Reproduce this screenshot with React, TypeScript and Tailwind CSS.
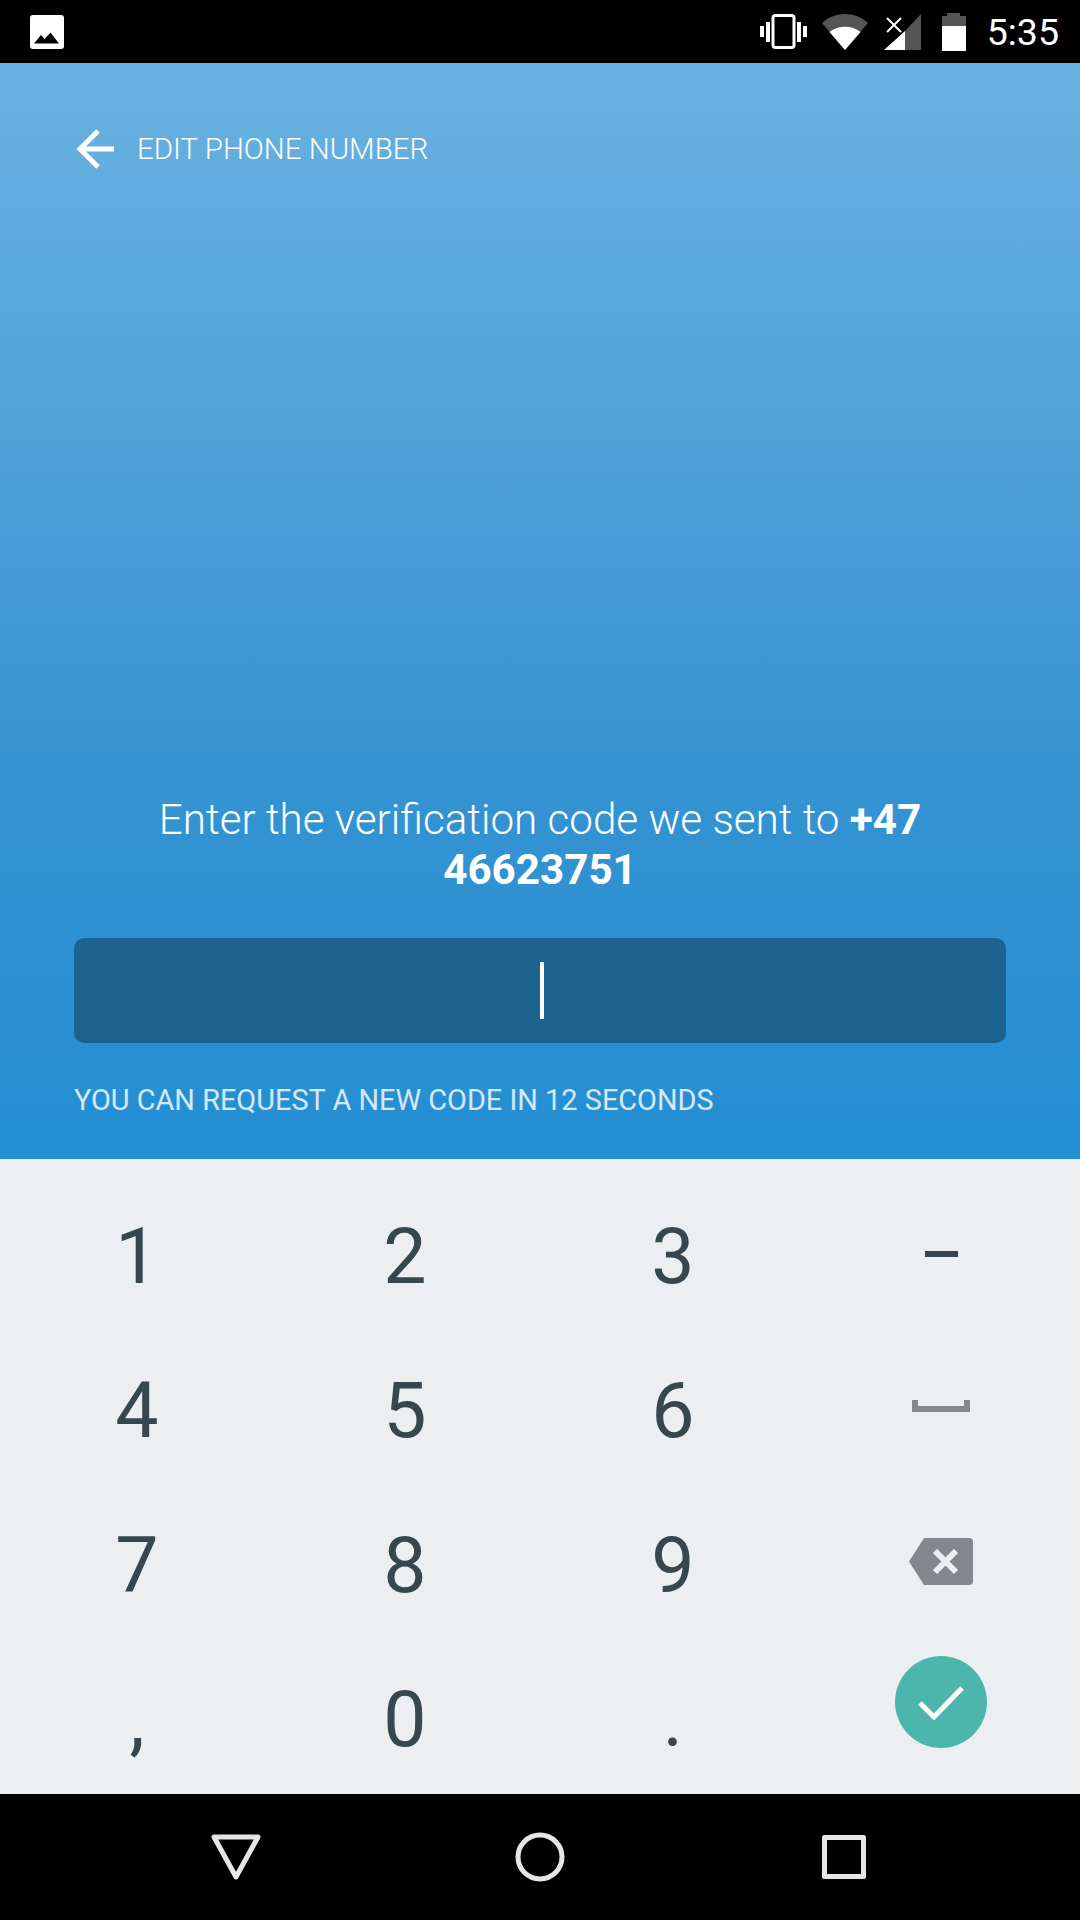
import React from 'react'

// Status bar icons
function PictureIcon() {
  return (
    <svg width="34" height="34" viewBox="0 0 34 34">
      <rect x="0" y="0" width="34" height="34" rx="3" fill="#fff" />
      <path d="M4 28.5 L11 20 L14.5 24 L20.5 17.5 L29 28.5 Z" fill="#000" />
    </svg>
  )
}

function VibrateIcon() {
  return (
    <svg width="47" height="35" viewBox="0 0 47 35" fill="#fff">
      <rect x="0" y="12" width="4" height="11" />
      <rect x="6" y="8" width="4" height="20" />
      <rect x="37" y="8" width="4" height="20" />
      <rect x="43" y="12" width="4" height="11" />
      <rect x="13" y="1.5" width="21" height="32" rx="2.5" fill="none" stroke="#fff" strokeWidth="3" />
    </svg>
  )
}

function WifiIcon() {
  return (
    <svg width="46" height="36" viewBox="0 0 46 36">
      <path d="M0 9 C13 -3 33 -3 46 9 L23 36 Z" fill="#555" />
      <path d="M7.5 18 C16 11 30 11 38.5 18 L23 36 Z" fill="#fff" />
    </svg>
  )
}

function SignalIcon() {
  return (
    <svg width="37" height="36" viewBox="0 0 37 36">
      <path d="M37 0 V36 H21 V17 Z" fill="#555" />
      <path d="M21 17 V36 H0 Z" fill="#fff" />
      <path d="M3 4 L17 18 M17 4 L3 18" stroke="#fff" strokeWidth="2" />
    </svg>
  )
}

function BatteryIcon() {
  return (
    <svg width="24" height="38" viewBox="0 0 24 38">
      <path d="M5 0 H18 V3 H24 V13 H0 V3 H5 Z" fill="#555" />
      <rect x="0" y="13" width="24" height="25" fill="#fff" />
    </svg>
  )
}

function StatusBar() {
  return (
    <div className="h-[63px] bg-black flex items-center justify-between pl-[30px] pr-[21px] shrink-0">
      <PictureIcon />
      <div className="flex items-center">
        <VibrateIcon />
        <div className="ml-[15px]"><WifiIcon /></div>
        <div className="ml-[16px]"><SignalIcon /></div>
        <div className="ml-[21px]"><BatteryIcon /></div>
        <span className="ml-[21px] text-[37.5px] leading-[40px] text-white">5:35</span>
      </div>
    </div>
  )
}

function Header() {
  return (
    <div className="flex items-center pl-[76px] pt-[66px]">
      <svg width="38" height="40" viewBox="0 0 38 40" fill="none" stroke="#fff" strokeWidth="5">
        <path d="M38 20 H4" />
        <path d="M22 2 L4 20 L22 38" />
      </svg>
      <span className="ml-[23px] text-[29.5px] leading-[38px] font-light text-white">EDIT PHONE NUMBER</span>
    </div>
  )
}

function CodeForm() {
  return (
    <div className="px-[74px] pb-[39px]">
      <p className="text-[42.2px] leading-[50px] font-light text-white text-center">
        Enter the verification code we sent to <b className="font-bold">+47</b>
        <br />
        <b className="font-bold">46623751</b>
      </p>
      <div className="mt-[43px] h-[105px] rounded-[10px] bg-[#1c628f] flex items-center justify-center">
        <div className="w-[4px] h-[57px] bg-white ml-[3px]" />
      </div>
      <p className="mt-[37px] text-[28.9px] leading-[40px] text-white/80">YOU CAN REQUEST A NEW CODE IN 12 SECONDS</p>
    </div>
  )
}

function Digit({ value }: { value: string }) {
  return (
    <div className="flex items-center justify-center pt-[7px] text-[77px] leading-none text-[#37474f]">
      {value}
    </div>
  )
}

function Key({ children }: { children: React.ReactNode }) {
  return <div className="flex items-center justify-center">{children}</div>
}

function Keypad() {
  return (
    <div className="h-[635px] bg-[#ebeff2] pt-[18px] pl-[3px] grid grid-cols-[268px_268px_268px_268px] grid-rows-4 shrink-0">
      <Digit value="1" />
      <Digit value="2" />
      <Digit value="3" />
      <Key><div className="w-[33px] h-[6px] bg-[#37474f]" /></Key>

      <Digit value="4" />
      <Digit value="5" />
      <Digit value="6" />
      <Key>
        <svg className="mb-[5px]" width="58" height="12" viewBox="0 0 58 12" fill="#82898c">
          <path d="M0 0 H6 V6 H52 V0 H58 V12 H0 Z" />
        </svg>
      </Key>

      <Digit value="7" />
      <Digit value="8" />
      <Digit value="9" />
      <Key>
        <svg className="mb-[2px]" width="64" height="47" viewBox="0 0 64 47">
          <path d="M15 0 H60 Q64 0 64 4 V43 Q64 47 60 47 H15 L0 23.5 Z" fill="#82898c" />
          <path d="M26 13 L47 34 M47 13 L26 34" stroke="#ebeff2" strokeWidth="6" />
        </svg>
      </Key>

      <Digit value="," />
      <Digit value="0" />
      <Digit value="." />
      <Key>
        <div className="w-[92px] h-[92px] mb-[29px] rounded-full bg-[#4db6ac] flex items-center justify-center">
          <svg width="46" height="36" viewBox="0 0 46 36" fill="none" stroke="#fff" strokeWidth="5">
            <path d="M2 19 L16 33 L44 4" />
          </svg>
        </div>
      </Key>
    </div>
  )
}

function NavBar() {
  return (
    <div className="h-[126px] bg-black flex items-center justify-center shrink-0">
      <div className="grid grid-cols-3 w-[912px] items-center justify-items-center">
        <svg width="50" height="46" viewBox="0 0 50 46" fill="none" stroke="#e6e6e6" strokeWidth="5" strokeLinejoin="round">
          <path d="M3 3 H47 L25 43 Z" />
        </svg>
        <svg width="50" height="50" viewBox="0 0 50 50" fill="none" stroke="#e6e6e6" strokeWidth="5">
          <circle cx="25" cy="25" r="22" />
        </svg>
        <svg width="44" height="44" viewBox="0 0 44 44" fill="none" stroke="#e6e6e6" strokeWidth="5" strokeLinejoin="round">
          <rect x="2.5" y="2.5" width="39" height="39" />
        </svg>
      </div>
    </div>
  )
}

export default function App() {
  return (
    <div className="w-[1080px] h-[1920px] flex flex-col overflow-hidden font-[Roboto,sans-serif]">
      <StatusBar />
      <div className="flex-1 flex flex-col justify-between bg-gradient-to-b from-[#6ab2e1] via-[#3593d1] via-65% to-[#238ed3]">
        <Header />
        <CodeForm />
      </div>
      <Keypad />
      <NavBar />
    </div>
  )
}
